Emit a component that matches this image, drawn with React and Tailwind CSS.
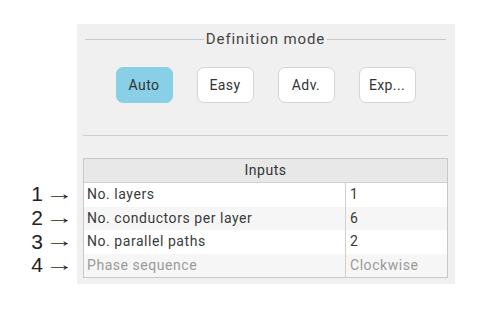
import React from "react";

const modes = [
    {label: "Auto", active: true},
    {label: "Easy"},
    {label: "Adv."},
    {label: "Exp..."},
];

const rows = [
    {name: "No. layers", value: "1"},
    {name: "No. conductors per layer", value: "6"},
    {name: "No. parallel paths", value: "2"},
    {name: "Phase sequence", value: "Clockwise", disabled: true},
];

export default function App() {
    return (
        <div className="w-[495px] h-[314px] bg-white flex pt-[24px] font-['Roboto',sans-serif] text-[#333]">
            {/* arrow markers */}
            <div className="w-[77px] flex flex-col pt-[158px] pr-[8px]">
                {rows.map((row, i) => (
                    <div key={i}
                         className={"flex items-center justify-end gap-[7px] text-[21px] text-[#222] font-['Liberation_Sans',sans-serif] " + (i === 0 ? "h-[24px]" : "h-[23.5px]")}>
                        <span>{i + 1}</span>
                        <span className="inline-block text-[19px] scale-x-150">→</span>
                    </div>
                ))}
            </div>

            <div className="w-[378px] h-[260px] bg-[#f0f0f0] flex flex-col pt-[6px] pl-[6px] pr-[7px]">
                <div className="flex items-center h-[18px] px-[2px]">
                    <div className="flex-1 h-px bg-[#c8c8c8]"></div>
                    <div className="px-[2px] text-[15px] tracking-[0.9px] text-[#444] leading-none">Definition mode</div>
                    <div className="flex-1 h-px bg-[#c8c8c8]"></div>
                </div>

                <div className="flex justify-center gap-[24px] mt-[19px]">
                    {modes.map((mode, i) => (
                        <div key={i}
                             className={"w-[57px] h-[36px] rounded-[7px] border flex items-center justify-center text-[14px] tracking-[0.4px] " +
                                 (mode.active ? "bg-[#89cfe6] border-[#89cfe6] text-[#333]" : "bg-white border-[#d4d4d4] text-[#333]")}>
                            {mode.label}
                        </div>
                    ))}
                </div>

                <div className="h-px bg-[#cfcfcf] mt-[32px]"></div>

                <div className="mt-[22px] border border-[#c8c8c8] text-[14px] tracking-[0.55px]">
                    <div className="h-[24px] bg-[#e8e8e8] border-b border-[#d0d0d0] flex items-center justify-center text-[#333]">
                        Inputs
                    </div>
                    {rows.map((row, i) => (
                        <div key={i}
                             className={"flex h-[23.5px] " + (i % 2 === 1 ? "bg-[#f6f6f6]" : "bg-white") + (row.disabled ? " text-[#9a9a9a]" : " text-[#3a3a3a]")}>
                            <div className="w-[262px] flex items-center pl-[3px] border-r border-[#d0d0d0]">{row.name}</div>
                            <div className="flex-1 flex items-center pl-[4px]">{row.value}</div>
                        </div>
                    ))}
                </div>
            </div>
        </div>
    );
}
